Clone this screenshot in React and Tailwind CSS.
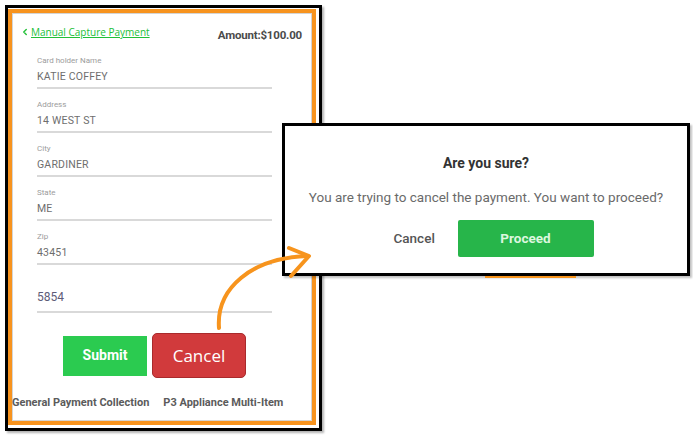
import { ChevronLeft } from 'lucide-react';

const fields = [
  { label: 'Card holder Name', value: 'KATIE COFFEY' },
  { label: 'Address', value: '14 WEST ST' },
  { label: 'City', value: 'GARDINER' },
  { label: 'State', value: 'ME' },
  { label: 'Zip', value: '43451' },
];

function Field({ label, value, first }) {
  return (
    <div className={`${first ? 'pt-[0px]' : 'pt-[11px]'} border-b-2 border-[#d9d9d9] pb-[4px]`}>
      <div className="text-[8px] leading-[10px] text-[#9c9c9c]">{label}</div>
      <div className="mt-[5px] text-[10.5px] leading-[12px] tracking-[0.2px] text-[#6e6e6e]">{value}</div>
    </div>
  );
}

function Dialog() {
  return (
    <div className="absolute left-[282px] top-[123px] h-[153px] w-[408px] border-[3px] border-black bg-white shadow-[2px_2px_2px_rgba(0,0,0,0.25)]">
      <div className="absolute left-[200px] -bottom-[5px] h-[2px] w-[91px] bg-[#f7941d]" />
      <div className="flex h-full flex-col items-center">
        <div className="mt-[29px] text-[14px] font-bold leading-[16px] text-[#333]">Are you sure?</div>
        <div className="mt-[18px] text-[13.5px] leading-[16px] text-[#6a6a6a]">
          You are trying to cancel the payment. You want to proceed?
        </div>
        <div className="mt-[15px] flex items-center pl-[15px]">
          <span className="w-[64px] text-[13.5px] font-medium text-[#555]">Cancel</span>
          <button className="h-[37px] w-[136px] rounded-[2px] bg-[#27b54a] text-[13.5px] font-bold text-[#dcf7df]">
            Proceed
          </button>
        </div>
      </div>
    </div>
  );
}

function Arrow() {
  return (
    <svg className="pointer-events-none absolute left-0 top-0" width="693" height="437" viewBox="0 0 693 437">
      <g fill="none" stroke="#f7941d" strokeWidth="4" strokeLinecap="round" strokeLinejoin="round">
        <path d="M219 328 C216 288 252 258 307 256" />
        <path d="M289 248 L309 256 L291 276" />
      </g>
    </svg>
  );
}

export default function App() {
  return (
    <div className="relative h-[437px] w-[693px] overflow-hidden bg-white font-['Roboto',sans-serif]">
      <div className="pl-[5px] pt-[5px]">
        <div className="h-[426px] w-[317px] border-[3px] border-black pb-[2px] pl-[0px] pr-[3px] pt-[1px] shadow-[2px_2px_2px_rgba(0,0,0,0.3)]">
          <div className="h-[416px] w-[308px] border-4 border-[#f7931e]">
            <div className="flex h-full flex-col border border-[#d4d4d4] bg-white">
              <div className="flex items-start justify-between pl-[7px] pr-[9px] pt-[12px]">
                <div className="flex items-center">
                  <ChevronLeft className="h-[10px] w-[10px] text-[#27c23c]" strokeWidth={3.5} />
                  <span className="ml-[1px] font-['Open_Sans',sans-serif] text-[10px] leading-[12px] text-[#21c038] underline">
                    Manual Capture Payment
                  </span>
                </div>
                <span className="mt-[3px] text-[11.5px] font-bold leading-[13px] tracking-[-0.2px] text-[#4a4a4a]">
                  Amount:$100.00
                </span>
              </div>
              <div className="ml-[24px] mt-[14px] w-[235px]">
                {fields.map((f, i) => (
                  <Field key={f.label} label={f.label} value={f.value} first={i === 0} />
                ))}
                <div className="border-b-2 border-[#d9d9d9] pb-[7px] pt-[25px] text-[12px] leading-[14px] text-[#5e5c78]">
                  5854
                </div>
              </div>
              <div className="ml-[50px] mt-[20px] flex items-center gap-[5px]">
                <button className="h-[40px] w-[84px] bg-[#2bcb50] text-[14px] font-bold text-white">Submit</button>
                <button className="h-[45px] w-[94px] rounded-[5px] border border-[#a92a2c] bg-[#d13a3c] font-['Open_Sans',sans-serif] text-[17px] text-white">
                  Cancel
                </button>
              </div>
              <div className="mt-[18px] flex text-[11px] font-bold leading-[13px] text-[#5b5b5b]">
                <span className="-ml-[1px]">General Payment Collection</span>
                <span className="ml-[14px]">P3 Appliance Multi-Item</span>
              </div>
            </div>
          </div>
        </div>
      </div>
      <Dialog />
      <Arrow />
    </div>
  );
}
